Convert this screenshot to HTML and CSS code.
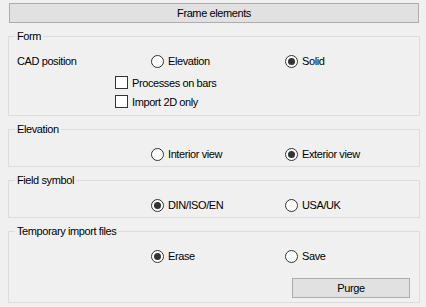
FILE: index.html
```html
<!DOCTYPE html>
<html lang="en">
<head>
    <meta charset="UTF-8">
    <title>Frame elements</title>
    <link rel="stylesheet" href="styles.css">
</head>
<body>
    <div class="window">
        <button class="btn btn-wide">Frame elements</button>

        <!-- Form -->
        <fieldset class="group">
            <legend>Form</legend>
            <div class="row">
                <span class="label">CAD position</span>
                <label class="opt"><span class="radio"></span>Elevation</label>
                <label class="opt"><span class="radio checked"></span>Solid</label>
            </div>
            <label class="check-row first"><span class="check"></span>Processes on bars</label>
            <label class="check-row"><span class="check"></span>Import 2D only</label>
        </fieldset>

        <!-- Elevation -->
        <fieldset class="group small">
            <legend>Elevation</legend>
            <div class="row">
                <span class="label"></span>
                <label class="opt"><span class="radio"></span>Interior view</label>
                <label class="opt"><span class="radio checked"></span>Exterior view</label>
            </div>
        </fieldset>

        <!-- Field symbol -->
        <fieldset class="group small">
            <legend>Field symbol</legend>
            <div class="row">
                <span class="label"></span>
                <label class="opt"><span class="radio checked"></span>DIN/ISO/EN</label>
                <label class="opt"><span class="radio"></span>USA/UK</label>
            </div>
        </fieldset>

        <!-- Temporary import files -->
        <fieldset class="group">
            <legend>Temporary import files</legend>
            <div class="row">
                <span class="label"></span>
                <label class="opt"><span class="radio checked"></span>Erase</label>
                <label class="opt"><span class="radio"></span>Save</label>
            </div>
            <button class="btn btn-purge">Purge</button>
        </fieldset>
    </div>
</body>
</html>
```

FILE: styles.css
```css
/* Dialog base */
body {
    margin: 0;
    background-color: #f0f0f0;
    font-family: 'Liberation Sans', Arial, sans-serif;
    font-size: 11px;
    letter-spacing: -0.4px;
    color: #000;
}

.window {
    padding: 3px 6px 0 8px;
}

/* Buttons */
.btn {
    font-family: inherit;
    font-size: 11px;
    letter-spacing: -0.4px;
    color: #000;
    background-color: #e1e1e1;
    border: 1px solid #adadad;
    height: 20px;
    padding: 0;
    display: block;
}

.btn-wide {
    width: 410px;
    margin: 0 0 6px 1px;
}

.btn-purge {
    width: 118px;
    margin: 12px 0 0 auto;
}

/* Group boxes */
.group {
    margin: 0 0 6px 0;
    padding: 8px 9px 4px 8px;
    border: 1px solid #dcdcdc;
    min-inline-size: 0;
}

.group.small {
    padding-bottom: 2px;
}

.group legend {
    padding: 0 2px;
    margin-left: -2px;
    line-height: 14px;
}

/* Option rows */
.row {
    display: grid;
    grid-template-columns: 134px 134px 1fr;
    align-items: center;
    height: 20px;
}

.opt {
    display: flex;
    align-items: center;
}

.radio {
    width: 11px;
    height: 11px;
    border: 1px solid #333;
    border-radius: 50%;
    background-color: #fff;
    margin-right: 4px;
    position: relative;
    flex-shrink: 0;
}

.radio.checked::after {
    content: '';
    position: absolute;
    left: 2px;
    top: 2px;
    width: 7px;
    height: 7px;
    border-radius: 50%;
    background-color: #333;
}

.check-row {
    display: flex;
    align-items: center;
    height: 19px;
    margin-left: 98px;
}

.check-row.first {
    margin-top: 2px;
}

.check {
    width: 11px;
    height: 11px;
    border: 1px solid #333;
    background-color: #fff;
    margin-right: 4px;
}
```
